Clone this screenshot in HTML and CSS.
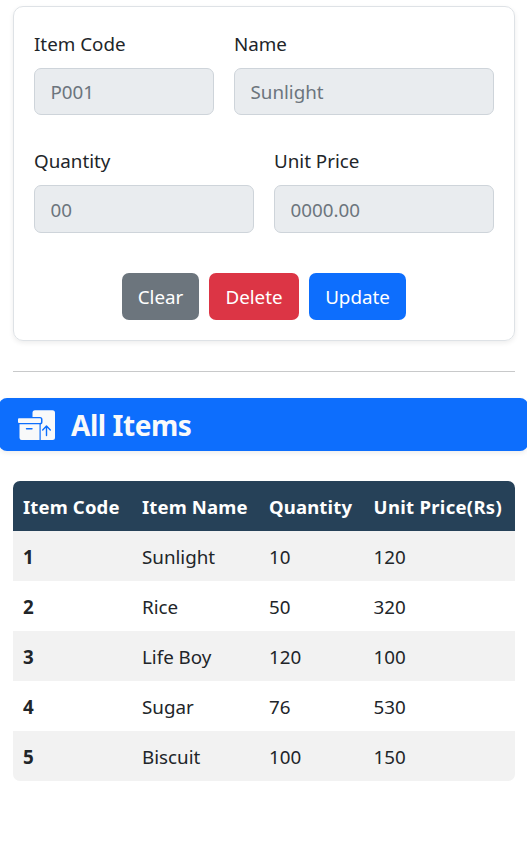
FILE: index.html
```html
<!DOCTYPE html>
<html lang="en">
<head>
<meta charset="utf-8">
<title>All Items</title>
<link rel="stylesheet" href="styles.css">
</head>
<body>
<form class="card">
  <div class="row">
    <label class="field code"><span>Item Code</span><input disabled placeholder="P001"></label>
    <label class="field"><span>Name</span><input disabled placeholder="Sunlight"></label>
  </div>
  <div class="row second">
    <label class="field"><span>Quantity</span><input disabled placeholder="00"></label>
    <label class="field"><span>Unit Price</span><input disabled placeholder="0000.00"></label>
  </div>
  <div class="buttons">
    <button type="button" class="btn clear">Clear</button>
    <button type="button" class="btn delete">Delete</button>
    <button type="button" class="btn update">Update</button>
  </div>
</form>
<hr>
<h2 class="banner">
  <svg class="icon" viewBox="0 0 38 32" aria-hidden="true">
    <path fill="#f8f9fa" d="M17 1.200h17.500a2.500 2.500 0 0 1 2.500 2.500v24.800a2.500 2.500 0 0 1-2.500 2.500H22.700V15.600a2.500 2.500 0 0 0 1.800-2.400v-2.700A2.500 2.500 0 0 0 22 8h-7.500V3.700a2.500 2.500 0 0 1 2.500-2.500z"/>
    <rect fill="#f8f9fa" x="0" y="9.300" width="23" height="4.700" rx="1"/>
    <path fill="#f8f9fa" d="M1.500 15.300h20V31H3.700a2.200 2.200 0 0 1-2.200-2.200z"/>
    <path fill="none" stroke="#0d6efd" stroke-width="1.400" stroke-linecap="round" stroke-linejoin="round" d="M8.500 19.800h5.500M28.500 26.500V17.200M24.700 20.900l3.800-3.900 3.800 3.900"/>
  </svg>
  <span>All Items</span>
</h2>
<table>
  <thead>
    <tr><th class="c1">Item Code</th><th class="c2">Item Name</th><th class="c3">Quantity</th><th class="c4">Unit Price(Rs)</th></tr>
  </thead>
  <tbody>
    <tr><th>1</th><td>Sunlight</td><td>10</td><td>120</td></tr>
    <tr><th>2</th><td>Rice</td><td>50</td><td>320</td></tr>
    <tr><th>3</th><td>Life Boy</td><td>120</td><td>100</td></tr>
    <tr><th>4</th><td>Sugar</td><td>76</td><td>530</td></tr>
    <tr><th>5</th><td>Biscuit</td><td>100</td><td>150</td></tr>
  </tbody>
</table>
</body>
</html>
```
FILE: styles.css
```css
* { box-sizing: border-box; }
body {
  margin: 0;
  padding: 6px 12px 0 13px;
  background: #fff;
  color: #212529;
  font: 18.8px/30px "Noto Sans", sans-serif;
  overflow: hidden;
}
.card {
  height: 335px;
  padding: 22px 20px 0;
  border: 1px solid #dee2e6;
  border-radius: 10px;
  box-shadow: 0 2px 5px rgba(0, 0, 0, .075);
}
.row { display: flex; gap: 20px; }
.row.second { margin-top: 31px; }
.field { flex: 1; min-width: 0; }
.field.code { flex: 0 0 180px; }
.field span { display: block; height: 30px; }
input {
  display: block;
  width: 100%;
  height: 47px;
  margin-top: 9px;
  padding: 0 15.5px;
  border: 1px solid #ced4da;
  border-radius: 7px;
  background: #e9ecef;
  font: inherit;
}
.second input { height: 48px; padding-top: 2px; }
input::placeholder { color: #6c757d; opacity: 1; }
.buttons { display: flex; justify-content: center; gap: 10px; margin-top: 40px; }
.btn {
  height: 47px;
  padding: 0;
  border: 0;
  border-radius: 7px;
  color: #fff;
  font: inherit;
}
.clear { width: 77px; background: #6c757d; }
.delete { width: 90px; background: #dc3545; }
.update { width: 97px; background: #0d6efd; }
hr { height: 1px; margin: 30px 0 26px; border: 0; background: #c8c9ca; }
.banner {
  display: flex;
  align-items: center;
  height: 53px;
  margin: 0 -13px 30px -14px;
  padding-left: 19px;
  border-radius: 8px;
  background: #0d6efd;
  box-shadow: 0 2px 5px rgba(0, 0, 0, .075);
  color: #f8f9fa;
  font-size: 28px;
  line-height: 36px;
  font-weight: 700;
  letter-spacing: -.45px;
}
.icon { width: 38px; height: 32px; margin-right: 15px; }
table {
  width: 502px;
  table-layout: fixed;
  border-collapse: collapse;
  border-radius: 7px;
  overflow: hidden;
}
th, td { height: 50px; padding: 2px 0 0 10px; text-align: left; white-space: nowrap; }
thead th { background: #264158; color: #fff; font-size: 18.5px; letter-spacing: .15px; }
thead .c4 { letter-spacing: .3px; }
.c1 { width: 119px; }
.c2 { width: 127px; }
.c3 { width: 104px; }
th:nth-child(4), td:nth-child(4) { padding-left: 10.6px; }
tbody tr:nth-child(odd) { background: #f2f2f2; }
```
